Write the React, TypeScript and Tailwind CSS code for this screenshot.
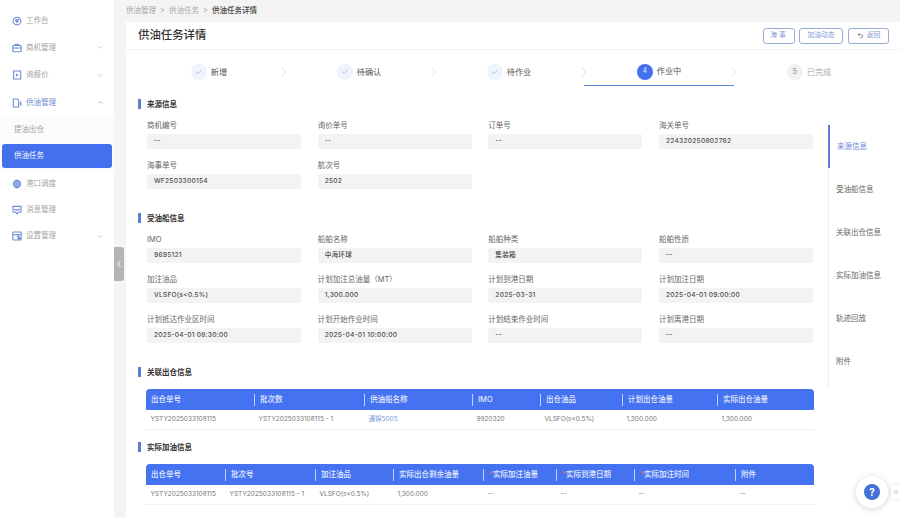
import { Check, ChevronDown, ChevronLeft, ChevronRight, ChevronUp, ChevronsRight, Undo2 } from 'lucide-react';

const FONT = 'font-[Inter,"Noto_Sans_CJK_SC",sans-serif]';

const sourceFields = [
  ['商机编号', '--'],
  ['询价单号', '--'],
  ['订单号', '--'],
  ['海关单号', '224320250802782'],
  ['海事单号', 'WF2503300154'],
  ['航次号', '2502'],
];

const shipFields = [
  ['IMO', '9695121'],
  ['船舶名称', '中海环球'],
  ['船舶种类', '集装箱'],
  ['船舶性质', '--'],
  ['加注油品', 'VLSFO(s<0.5%)'],
  ['计划加注总油量（MT）', '1,300.000'],
  ['计划到港日期', '2025-03-31'],
  ['计划加注日期', '2025-04-01 09:00:00'],
  ['计划抵达作业区时间', '2025-04-01 08:30:00'],
  ['计划开始作业时间', '2025-04-01 10:00:00'],
  ['计划结束作业时间', '--'],
  ['计划离港日期', '--'],
];

const anchors = ['来源信息', '受油船信息', '关联出仓信息', '实际加油信息', '轨迹回放', '附件'];

function SideIcon({ name }: { name: string }) {
  const cls = 'w-[10px] h-[10px] shrink-0';
  const stroke = { fill: 'none', stroke: '#6b8bd6', strokeWidth: 1.3 };
  if (name === 'home')
    return (
      <svg viewBox="0 0 12 12" className={cls}>
        <circle cx="6" cy="6" r="4.6" {...stroke} />
        <path d="M4 4.6h4L6 7.8z" {...stroke} />
      </svg>
    );
  if (name === 'case')
    return (
      <svg viewBox="0 0 12 12" className={cls}>
        <rect x="1" y="3" width="10" height="7.5" rx="1" {...stroke} />
        <path d="M4 3V1.5h4V3M1 6h10M6 5.4v1.4" {...stroke} />
      </svg>
    );
  if (name === 'quote')
    return (
      <svg viewBox="0 0 12 12" className={cls}>
        <path d="M2 1.2h8.4v9.6H2z" {...stroke} />
        <path d="M4.8 4l2.8 2-2.8 2z" fill="#6b8bd6" />
      </svg>
    );
  if (name === 'oil')
    return (
      <svg viewBox="0 0 12 12" className={cls}>
        <path d="M1.5 1.2h5l1.5 1.6v8H1.5z" {...stroke} />
        <path d="M9.6 4.5h1.6v4.5H9.6z" fill="#6b8bd6" />
      </svg>
    );
  if (name === 'port')
    return (
      <svg viewBox="0 0 12 12" className={cls}>
        <circle cx="6" cy="6" r="5" fill="#5f82d8" />
        <path d="M1 6h10M2.2 3.6h7.6M2.2 8.4h7.6" stroke="#fff" strokeWidth="0.7" />
      </svg>
    );
  if (name === 'msg')
    return (
      <svg viewBox="0 0 12 12" className={cls}>
        <path d="M1.2 1.6h9.6v7H7.6L6 10.6 4.4 8.6H1.2z" {...stroke} />
        <path d="M3.5 4.4v1.4h5V4.4" {...stroke} />
      </svg>
    );
  return (
    <svg viewBox="0 0 12 12" className={cls}>
      <rect x="1" y="1.2" width="10" height="9.6" rx="1" {...stroke} />
      <path d="M1 4.4h10" {...stroke} />
      <path d="M6 5.4h2.6v2H6z" fill="#6b8bd6" />
      <circle cx="8.6" cy="8.6" r="1.8" fill="#6b8bd6" />
    </svg>
  );
}

function MenuRow({ icon, label, arrow, active, height }: { icon: string; label: string; arrow?: 'up' | 'down'; active?: boolean; height: string }) {
  return (
    <div className={`flex items-center pl-[12px] pr-[10px] ${height}`}>
      <SideIcon name={icon} />
      <span className={`ml-[4px] text-[7.5px] flex-1 ${active ? 'text-[#6d8ad4]' : 'text-[#a3a3a3]'}`}>{label}</span>
      {arrow === 'down' && <ChevronDown className="w-[7px] h-[7px] text-[#a8a8a8]" />}
      {arrow === 'up' && <ChevronUp className="w-[7px] h-[7px] text-[#777]" />}
    </div>
  );
}

function Sidebar() {
  return (
    <aside className="w-[114px] shrink-0 bg-white pt-[8px]">
      <MenuRow icon="home" label="工作台" height="h-[26px]" />
      <MenuRow icon="case" label="商机管理" arrow="down" height="h-[27px]" />
      <MenuRow icon="quote" label="询报价" arrow="down" height="h-[28px]" />
      <MenuRow icon="oil" label="供油管理" arrow="up" active height="h-[27px]" />
      <div className="bg-[#fbfbfb] pb-[3px]">
        <div className="h-[28px] flex items-center pl-[14px] text-[7.5px] text-[#a3a3a3]">提油出仓</div>
        <div className="h-[24px] mx-[2px] pl-[12px] flex items-center rounded-[3px] bg-[#4470ee] text-[7.5px] text-white">供油任务</div>
      </div>
      <MenuRow icon="port" label="港口调度" height="h-[26px]" />
      <MenuRow icon="msg" label="消息管理" height="h-[26px]" />
      <MenuRow icon="set" label="设置管理" arrow="down" height="h-[26px]" />
    </aside>
  );
}

function SectionTitle({ title }: { title: string }) {
  return (
    <div className="flex items-center h-[10px] pl-[12px]">
      <span className="w-[3px] h-[10px] bg-[#5b7ed4]" />
      <span className="ml-[6px] text-[7.5px] leading-[12px] pt-[1px] font-semibold text-[#333]">{title}</span>
    </div>
  );
}

function Fields({ items }: { items: string[][] }) {
  return (
    <div className="grid grid-cols-4 gap-x-[16.67px] pl-[21px] pr-[15px]">
      {items.map(([label, value]) => (
        <div key={label} className="pt-[11px]">
          <div className="h-[10px] leading-[12px] mb-[4px] text-[7.5px] text-[#666]">{label}</div>
          <div className="h-[15px] rounded-[2px] bg-[#f4f3f4] pl-[7px] flex items-center text-[6.6px] font-medium tracking-[0.25px] text-[#4a4a4a]">
            {value}
          </div>
        </div>
      ))}
    </div>
  );
}

function Star() {
  return <span className="text-[#e06a70]">*</span>;
}

function Table({ cols, heads, cells }: { cols: string; heads: React.ReactNode[]; cells: React.ReactNode[] }) {
  return (
    <div className="ml-[20px] w-[668px]">
      <div className={`grid ${cols} h-[21px] items-center rounded-t-[4px] bg-[#4472f0] text-[7.5px] font-medium text-[#e4ebff]`}>
        {heads.map((h, i) => (
          <div key={i} className={`h-[12px] leading-[12px] pl-[5px] ${i > 0 ? 'border-l border-[#c3d2fa]' : ''}`}>
            {h}
          </div>
        ))}
      </div>
      <div className={`grid ${cols} h-[20px] items-center border-b border-[#f0f0f0] text-[6.5px] text-[#777]`}>
        {cells.map((c, i) => (
          <div key={i} className="pl-[4.5px] whitespace-nowrap">
            {c}
          </div>
        ))}
      </div>
    </div>
  );
}

function Step({ no, label, state }: { no: number; label: string; state: 'done' | 'active' | 'todo' }) {
  return (
    <div className={`relative w-[150px] h-[36px] pt-[8px] flex items-center justify-center ${state === 'active' ? 'border-b border-[#5b82d0]' : ''}`}>
      {state === 'done' && (
        <span className="w-[16px] h-[16px] rounded-full bg-[#edf4fb] flex items-center justify-center">
          <Check className="w-[8px] h-[8px] text-[#6f8fc8]" strokeWidth={1.5} />
        </span>
      )}
      {state === 'active' && (
        <span className="w-[16px] h-[16px] rounded-full bg-[#4470ee] flex items-center justify-center text-[7px] text-[#dfe7fd]">{no}</span>
      )}
      {state === 'todo' && (
        <span className="w-[16px] h-[16px] rounded-full bg-[#f1f1f1] flex items-center justify-center text-[7px] font-medium text-[#999]">{no}</span>
      )}
      <span className={`ml-[4px] text-[8.2px] ${state === 'todo' ? 'text-[#aaa]' : 'text-[#555]'}`}>{label}</span>
      {no < 5 && (
        <ChevronRight className="absolute right-[-8px] top-[14px] w-[16px] h-[16px] text-[#d2d2d2]" strokeWidth={1} />
      )}
    </div>
  );
}

export default function App() {
  return (
    <div className={`relative w-[900px] h-[518px] overflow-hidden flex bg-[#f4f4f5] ${FONT}`}>
      <Sidebar />
      {/* 접기 handle */}
      <div className="absolute left-[114px] top-[247px] w-[10px] h-[34px] rounded-r-[3px] bg-[#b4b4b4] flex items-center justify-center">
        <ChevronLeft className="w-[10px] h-[10px] text-white" strokeWidth={2.5} />
      </div>

      <main className="flex-1 pl-[12px] flex flex-col min-w-0">
        <div className="h-[22px] flex items-center gap-[4px] text-[7.5px] text-[#a9a9a9]">
          <span>供油管理</span>
          <span>&gt;</span>
          <span>供油任务</span>
          <span>&gt;</span>
          <span className="font-medium text-[#444]">供油任务详情</span>
        </div>

        <div className="flex-1 bg-white min-h-0">
          <div className="h-[28px] pl-[12px] pr-[11px] flex items-center border-b border-[#f1f3f6]">
            <h1 className="text-[11.4px] font-medium text-[#333] flex-1">供油任务详情</h1>
            <button className="w-[32px] h-[16px] rounded-[3px] border border-[#98acd6] text-[6.8px] tracking-[2px] text-[#7f9bd6]">海事</button>
            <button className="ml-[4px] w-[44px] h-[16px] rounded-[3px] border border-[#98acd6] text-[6.8px] text-[#7f9bd6]">加油动态</button>
            <button className="ml-[5px] w-[41px] h-[16px] rounded-[3px] border border-[#98acd6] text-[6.8px] text-[#7f9bd6] flex items-center justify-center gap-[3px]">
              <Undo2 className="w-[7px] h-[7px] text-[#555]" />
              返回
            </button>
          </div>

          <div className="flex pl-[8px]">
            <Step no={1} label="新增" state="done" />
            <Step no={2} label="待确认" state="done" />
            <Step no={3} label="待作业" state="done" />
            <Step no={4} label="作业中" state="active" />
            <Step no={5} label="已完成" state="todo" />
          </div>

          <div className="flex">
            <div className="w-[702px] shrink-0 pt-[13px]">
              <SectionTitle title="来源信息" />
              <Fields items={sourceFields} />
              <div className="mt-[24px]">
                <SectionTitle title="受油船信息" />
              </div>
              <Fields items={shipFields} />
              <div className="mt-[24px] mb-[12px]">
                <SectionTitle title="关联出仓信息" />
              </div>
              <Table
                cols="grid-cols-[108px_110px_108px_68px_82px_95px_97px]"
                heads={['出仓单号', '批次数', '供油船名称', 'IMO', '出仓油品', '计划出仓油量', '实际出仓油量']}
                cells={[
                  'YSTY2025033108115',
                  'YSTY2025033108115 - 1',
                  <span className="text-[#7a9ad8]">通锦5005</span>,
                  '9920320',
                  'VLSFO(s<0.5%)',
                  '1,300.000',
                  '1,300.000',
                ]}
              />
              <div className="mt-[12px] mb-[12px]">
                <SectionTitle title="实际加油信息" />
              </div>
              <Table
                cols="grid-cols-[79px_90px_78px_90px_73px_78px_101px_79px]"
                heads={[
                  '出仓单号',
                  '批次号',
                  '加注油品',
                  '实际出仓剩余油量',
                  <><Star />实际加注油量</>,
                  <><Star />实际到港日期</>,
                  <><Star />实际加注时间</>,
                  '附件',
                ]}
                cells={['YSTY2025033108115', 'YSTY2025033108115 - 1', 'VLSFO(s<0.5%)', '1,300.000', '--', '--', '--', '--']}
              />
            </div>

            <nav className="flex-1 mt-[39px] self-start border-l border-[#eeeeee] pb-[5px]">
              {anchors.map((a, i) => (
                <div
                  key={a}
                  className={`h-[43px] flex items-center text-[7.5px] ${
                    i === 0 ? '-ml-px border-l-2 border-[#5b7ed4] pl-[7px] text-[#6d8ad4]' : 'pl-[7px] text-[#666]'
                  }`}
                >
                  {a}
                </div>
              ))}
            </nav>
          </div>
        </div>
      </main>

      {/* help float */}
      <div className="absolute left-[856px] top-[476px] w-[32px] h-[32px] rounded-full bg-white shadow-[0_1px_6px_rgba(0,0,0,0.18)] flex items-center justify-center">
        <span className="w-[16px] h-[16px] rounded-full bg-[#4470d8] flex items-center justify-center text-[10px] font-bold text-white">?</span>
      </div>
      <div className="absolute left-[891px] top-[485px] w-[9px] h-[14px] bg-white shadow-[0_0_3px_rgba(0,0,0,0.12)] flex items-center justify-center">
        <ChevronsRight className="w-[8px] h-[8px] text-[#8ba3da]" />
      </div>
    </div>
  );
}
